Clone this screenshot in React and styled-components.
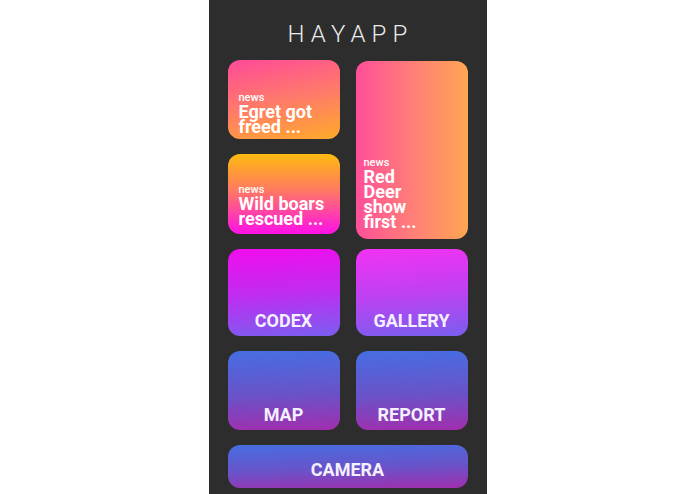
import React from "react";
import styled, { createGlobalStyle } from "styled-components";

const Global = createGlobalStyle`
  html, body { margin: 0; padding: 0; background: #ffffff; }
  body { font-family: Roboto, "Noto Sans", sans-serif; }
`;

const Panel = styled.div`
  width: 278px;
  min-height: 494px;
  margin: 0 auto;
  background: #2d2d2d;
  box-sizing: border-box;
  padding: 20px 19px 0;
  display: flex;
  flex-direction: column;
`;

const Title = styled.h1`
  margin: 0 0 12px;
  height: 28px;
  font-family: Roboto, sans-serif;
  font-weight: 300;
  font-size: 24px;
  line-height: 28px;
  letter-spacing: 6.2px;
  padding-left: 6px;
  color: #ececec;
  text-align: center;
`;

const Grid = styled.div`
  display: grid;
  grid-template-columns: 112px 112px;
  grid-template-rows: 79px 80px 87px 79px 43px;
  column-gap: 16px;
  row-gap: 15px;
`;

const Card = styled.div`
  border-radius: 12px;
  background: ${(p) => p.$bg};
  display: flex;
  flex-direction: column;
  justify-content: flex-end;
  box-sizing: border-box;
  padding: 0 ${(p) => p.$px || 11}px ${(p) => p.$pb || 6}px;
  color: #ffffff;
  grid-column: ${(p) => p.$col || "auto"};
  grid-row: ${(p) => p.$row || "auto"};
  margin-bottom: ${(p) => p.$mb || 0}px;
  margin-top: ${(p) => p.$mt || 0}px;
`;

const Tag = styled.div`
  font-size: 11px;
  font-weight: 500;
  line-height: 12px;
`;

const Headline = styled.div`
  font-size: 18px;
  font-weight: 700;
  line-height: 15px;
`;

const Tile = styled.div`
  border-radius: 12px;
  background: ${(p) => p.$bg};
  display: flex;
  align-items: flex-end;
  justify-content: center;
  box-sizing: border-box;
  padding-bottom: ${(p) => p.$pb}px;
  color: #f4f0ff;
  font-size: 18px;
  font-weight: 700;
  line-height: 18px;
  grid-column: ${(p) => p.$col || "auto"};
`;

const blue = "linear-gradient(178deg, #466ee2 0%, #6a52c8 55%, #a22eae 100%)";

export default function App() {
  return (
    <>
      <Global />
      <Panel>
        <Title>HAYAPP</Title>
        <Grid>
          <Card
            $bg="linear-gradient(168deg, #ff4a99 0%, #ff7a6a 50%, #ffaa2a 100%)"
            $pb={5}
            $row="1"
          >
            <Tag>news</Tag>
            <Headline>
              Egret got
              <br />
              freed ...
            </Headline>
          </Card>
          <Card
            $bg="linear-gradient(90deg, #ff4f98 0%, #ff7e78 50%, #ffa652 100%)"
            $col="2"
            $row="1 / span 2"
            $px={8}
            $pb={10}
            $mt={1}
            $mb={-5}
          >
            <Tag>news</Tag>
            <Headline>
              Red
              <br />
              Deer
              <br />
              show
              <br />
              first ...
            </Headline>
          </Card>
          <Card
            $bg="linear-gradient(180deg, #ffbb10 0%, #ff7a60 45%, #ff10e8 100%)"
            $pb={8}
            $row="2"
          >
            <Tag>news</Tag>
            <Headline>
              Wild boars
              <br />
              rescued ...
            </Headline>
          </Card>
          <Tile $bg="linear-gradient(176deg, #f20cee 0%, #c02cf0 50%, #7a5ef0 100%)" $pb={6}>
            CODEX
          </Tile>
          <Tile $bg="linear-gradient(176deg, #f232f4 0%, #c040f2 50%, #7a5ef0 100%)" $pb={6}>
            GALLERY
          </Tile>
          <Tile $bg={blue} $pb={6}>
            MAP
          </Tile>
          <Tile $bg={blue} $pb={6}>
            REPORT
          </Tile>
          <Tile $bg={blue} $pb={9} $col="1 / span 2">
            CAMERA
          </Tile>
        </Grid>
      </Panel>
    </>
  );
}
